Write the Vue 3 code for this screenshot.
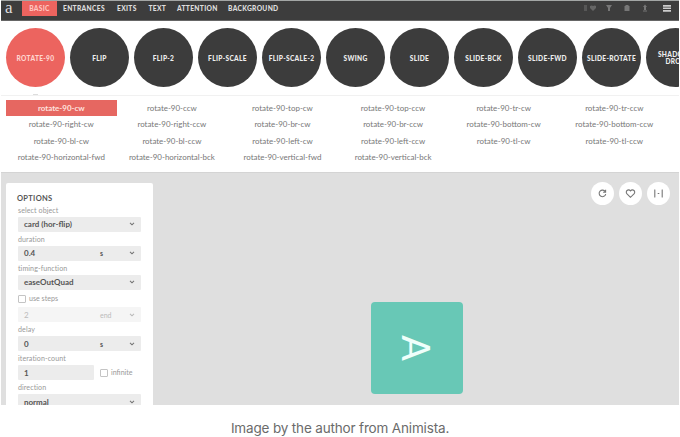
<script setup>
const tabs = [
  { name: 'BASIC', width: 35, left: 0 }, { name: 'ENTRANCES', width: 41, left: 6 }, { name: 'EXITS', width: 18, left: 13 },
  { name: 'TEXT', width: 16, left: 13.5 }, { name: 'ATTENTION', width: 38, left: 12.5 }, { name: 'BACKGROUND', width: 51, left: 13 },
]
const groups = ['ROTATE-90', 'FLIP', 'FLIP-2', 'FLIP-SCALE', 'FLIP-SCALE-2', 'SWING', 'SLIDE', 'SLIDE-BCK', 'SLIDE-FWD', 'SLIDE-ROTATE', 'SHADOW-DROP']
const variants = [
  'cw', 'ccw', 'top-cw', 'top-ccw', 'tr-cw', 'tr-ccw',
  'right-cw', 'right-ccw', 'br-cw', 'br-ccw', 'bottom-cw', 'bottom-ccw',
  'bl-cw', 'bl-ccw', 'left-cw', 'left-ccw', 'tl-cw', 'tl-ccw',
  'horizontal-fwd', 'horizontal-bck', 'vertical-fwd', 'vertical-bck',
]
</script>

<template>
  <figure class="figure">
    <div class="app">
      <header class="bar">
        <span class="logo">a</span>
        <nav class="tabs">
          <span v-for="(t, i) in tabs" :key="t.name" class="tab" :class="{ active: i === 0 }" :style="{ width: t.width + 'px', marginLeft: t.left + 'px' }">{{ t.name }}</span>
        </nav>
        <svg class="tools" width="94" height="14" viewBox="0 0 94 14">
          <g fill="#777">
            <path d="M1 4h3v6h-3z" opacity=".45" />
            <path d="M7 5q2-1 3 0q2-1 3 0v2l-3 3l-3-3z" opacity=".7" />
            <path d="M23 4h6l-2 3v3h-2v-3z" />
            <path d="M41.500 5h1V4h3v1h1v5h-5z" />
            <path d="M62 3.500l2 2.500h-1v3h-2V6h-1zM60 9.500h4v1h-4z" />
          </g>
          <path d="M80 4h8v1.700h-8zM80 6.500h8v1.600h-8zM80 9h8v1.700h-8z" fill="#ccc" />
        </svg>
      </header>
      <section class="groups">
        <div v-for="(g, i) in groups" :key="g" class="circle" :class="{ active: i === 0 }">
          <span v-if="i < 10">{{ g }}</span>
          <span v-else>SHADOW-<br>DROP</span>
        </div>
      </section>
      <div class="divider"><i></i></div>
      <section class="variants">
        <span v-for="(v, i) in variants" :key="v" class="variant" :class="{ active: i === 0 }">rotate-90-{{ v }}</span>
      </section>
      <main class="stage">
        <aside class="options">
          <h2>OPTIONS</h2>
          <label>select object</label>
          <div class="field"><b>card (hor-flip)</b><svg class="chev" viewBox="0 0 6 4"><path d="M1 .8L3 2.800L5 .8" /></svg></div>
          <label>duration</label>
          <div class="field"><b>0.4</b><b class="unit">s</b><svg class="chev" viewBox="0 0 6 4"><path d="M1 .8L3 2.800L5 .8" /></svg></div>
          <label>timing-function</label>
          <div class="field"><b>easeOutQuad</b><svg class="chev" viewBox="0 0 6 4"><path d="M1 .8L3 2.800L5 .8" /></svg></div>
          <div class="check steps"><i></i>use steps</div>
          <div class="field disabled"><b>2</b><b class="unit">end</b><svg class="chev" viewBox="0 0 6 4"><path d="M1 .8L3 2.800L5 .8" /></svg></div>
          <label>delay</label>
          <div class="field"><b>0</b><b class="unit">s</b><svg class="chev" viewBox="0 0 6 4"><path d="M1 .8L3 2.800L5 .8" /></svg></div>
          <label>iteration-count</label>
          <div class="row"><div class="field short"><b>1</b></div><div class="check"><i></i>infinite</div></div>
          <label>direction</label>
          <div class="field"><b>normal</b><svg class="chev" viewBox="0 0 6 4"><path d="M1 .8L3 2.800L5 .8" /></svg></div>
        </aside>
        <div class="preview"><div class="card"><span>A</span></div></div>
        <div class="actions">
          <span><svg width="11" height="11" viewBox="0 0 11 11"><path d="M8.300 3.700A3.300 3.300 0 1 0 8.700 6M8.600 1.800v2.500H6.100" /></svg></span>
          <span><svg width="11" height="11" viewBox="0 0 11 11"><path d="M5.500 9.300L2 5.900C-.2 3.500 3.200 .2 5.500 2.900C7.800 .2 11.200 3.500 9 5.900Z" /></svg></span>
          <span><svg width="11" height="11" viewBox="0 0 11 11"><path d="M2.300 2h-.5v7h.5M8.700 2h.5v7h-.5M4.700 5.500h1.600" /></svg></span>
        </div>
      </main>
    </div>
    <figcaption>Image by the author from Animista.</figcaption>
  </figure>
</template>

<style>
body { background: #fff; }
</style>
<style scoped>
* { box-sizing: border-box; }
.figure { margin: 0; width: 680px; height: 437px; overflow: hidden; font-family: Lato, sans-serif; }
.app { width: 678px; height: 405px; margin-left: 1px; overflow: hidden; border-top: 1px solid #a3a6a5; }
.bar { height: 20px; background: #3d3d3d; display: flex; align-items: flex-start; border-bottom: 1px solid #666; }
.logo { width: 21px; padding-left: 4px; font: 17px/14px "Liberation Serif", serif; color: #ddd; }
.tabs { display: flex; flex: 1; }
.tab { height: 15px; line-height: 14px; font-size: 6.700px; font-weight: 900; letter-spacing: .3px; color: #ddd; white-space: nowrap; }
.tab.active { background: #ec645f; text-align: center; color: #ffc5c0; }
.tools { margin-right: 2px; }
.groups { height: 73px; padding: 7px 0 0 5px; display: flex; gap: 5px; overflow: hidden; }
.circle { flex: 0 0 59px; height: 59px; border-radius: 50%; background: #3c3c3c; color: #eee; display: flex; align-items: center; justify-content: center; text-align: center; font-size: 6.600px; line-height: 7px; font-weight: 900; letter-spacing: .32px; white-space: nowrap; }
.circle span { padding-top: 1px; }
.circle.active { background: #ec645f; color: #ffd5d0; }
.divider { height: 2px; border-bottom: 1px solid #f1f1f1; }
.divider i { display: block; width: 5px; height: 1px; margin-left: 32px; background: #ddd; }
.variants { height: 76px; padding: 4px 9px 0 5px; display: grid; grid-template-columns: repeat(6, 110.600px); grid-auto-rows: 16.300px; }
.variant { text-align: center; font-size: 7.950px; line-height: 16px; color: #777; white-space: nowrap; }
.variant.active { background: #e66761; color: #ffe2df; font-weight: 700; height: 16px; }
.stage { height: 233px; background: #dfdfdf; display: flex; align-items: flex-start; border-top: 1px solid #d4d4d4; }
.options { width: 147px; height: 235px; margin: 9.500px 0 0 5px; padding: 12px 12px 0; background: #fff; border-radius: 2px; color: #999; }
h2 { margin: 0 0 0 -1px; font-size: 7.500px; line-height: 8px; height: 8.600px; font-weight: 700; color: #555; letter-spacing: .3px; }
label { display: block; height: 13.600px; line-height: 16px; font-size: 7.100px; letter-spacing: .08px; }
.field { height: 15.400px; background: #ececec; display: flex; align-items: center; padding: 0 6px; color: #555; border-radius: 1px; position: relative; font-size: 8px; }
.field b { font-weight: 700; }
.field .unit { position: absolute; left: 82px; font-size: 7px; }
.chev { width: 6px; height: 4px; margin-left: auto; fill: none; stroke: #777; stroke-width: 1.100; }
.field.disabled { background: #f5f5f5; color: #bbb; }
.field.disabled b { font-weight: 400; }
.field.disabled .chev { stroke: #bbb; }
.check { display: flex; align-items: center; gap: 3px; font-size: 7.100px; color: #999; }
.check i { width: 8px; height: 8px; border: 1px solid #c4c4c4; border-radius: 1px; }
.steps { height: 17px; }
.row { display: flex; gap: 6px; height: 15.400px; }
.short { width: 76px; }
.preview { flex: 1; padding: 129px 0 0 218px; }
.card { width: 92px; height: 92px; border-radius: 4px; background: #68c8b6; display: flex; align-items: center; justify-content: center; color: #effffb; }
.card span { font: 38px/38px Lato, sans-serif; transform: rotate(90deg); }
.actions { display: flex; gap: 5px; padding: 9px 9px 0 0; }
.actions span { width: 23px; height: 23px; border-radius: 50%; background: #fff; display: flex; align-items: center; justify-content: center; }
.actions path { fill: none; stroke: #777; stroke-width: 1.100; }
figcaption { text-align: center; font: 13.500px/20px Inter, sans-serif; letter-spacing: -.16px; color: #6b6b6b; padding-top: 13px; }
</style>
